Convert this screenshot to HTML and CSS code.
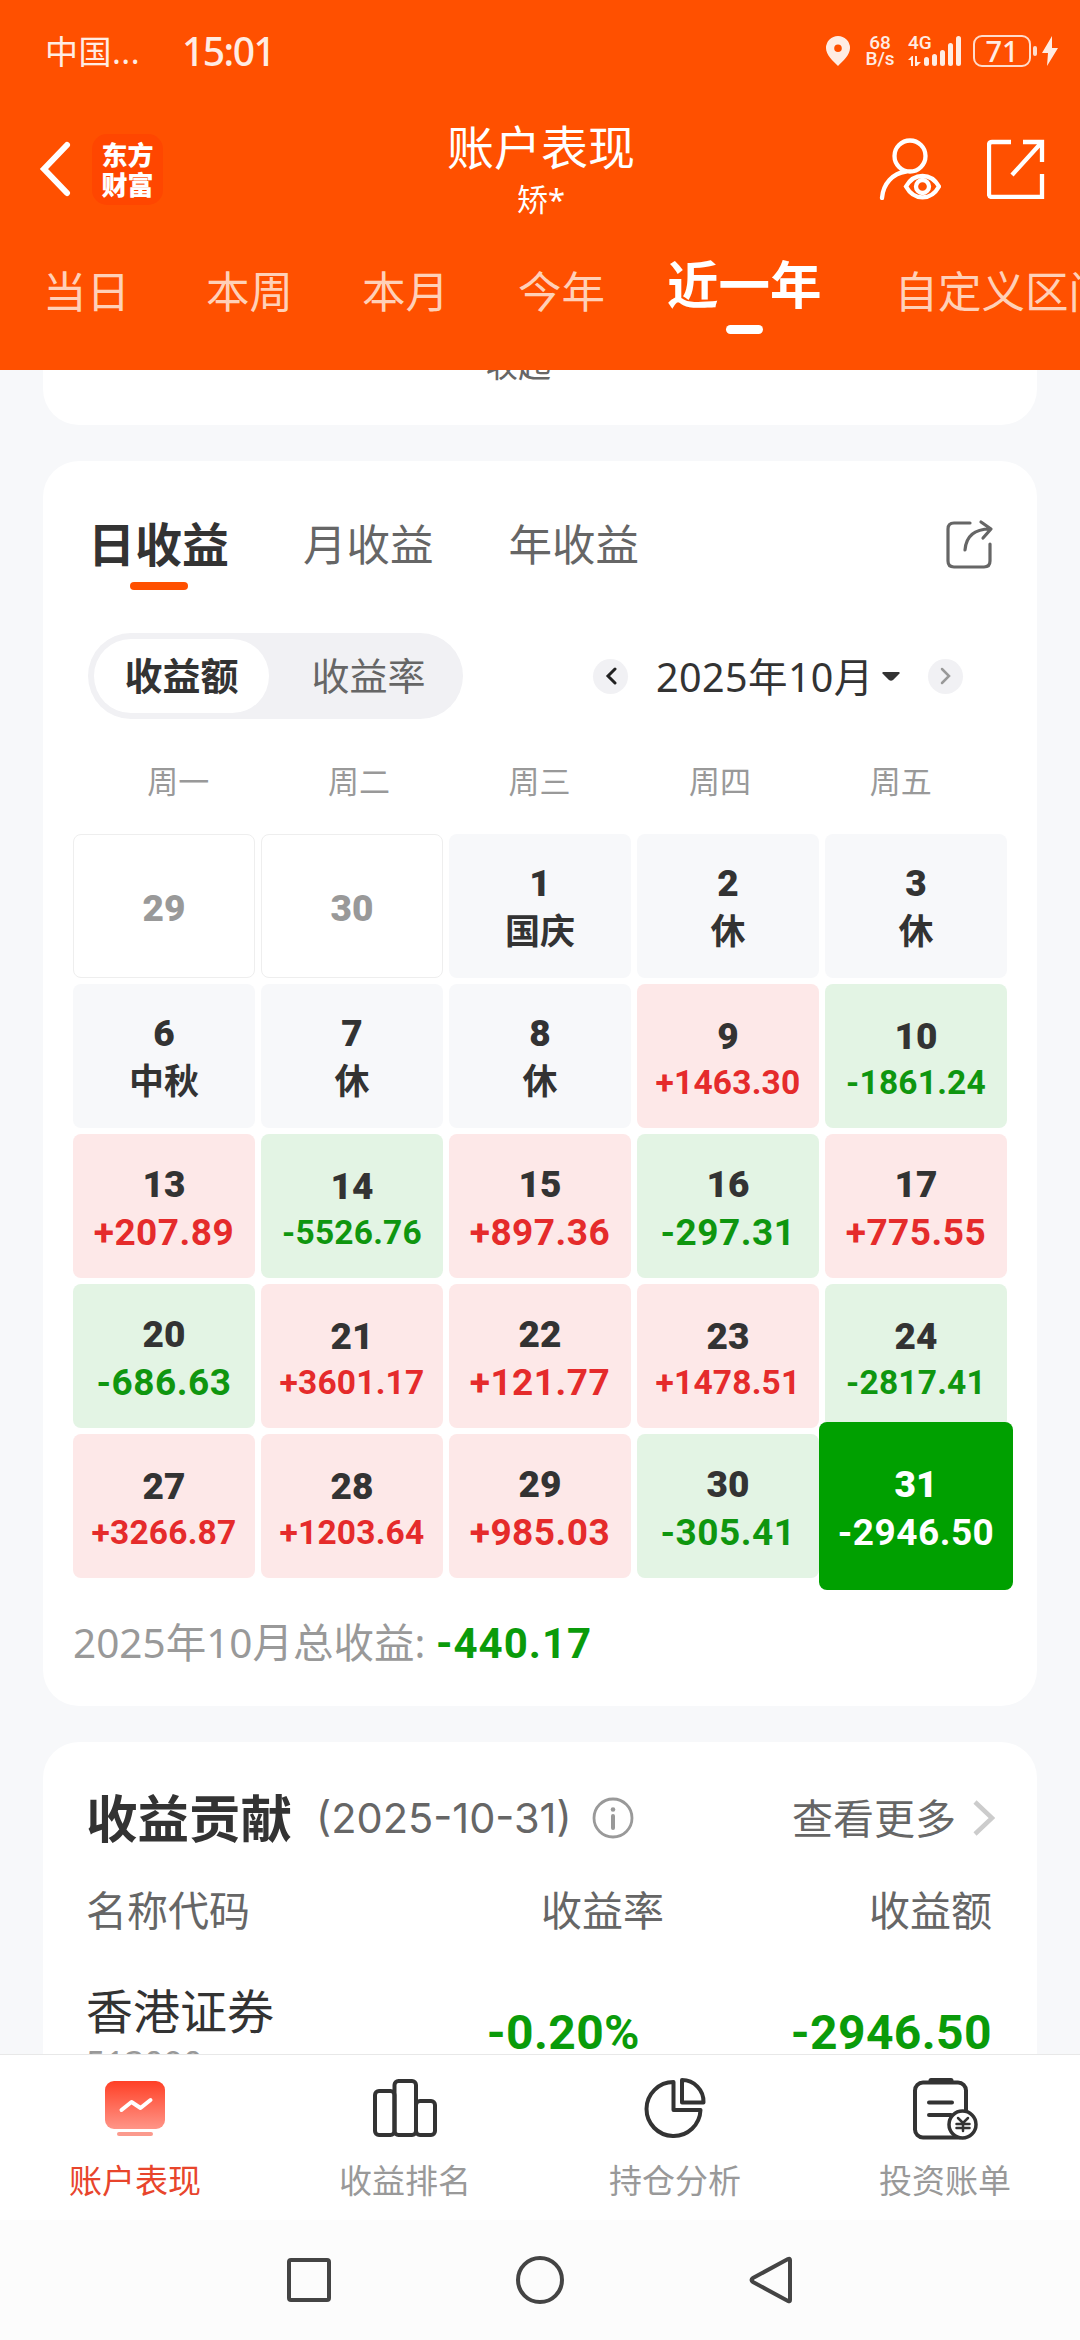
FILE: index.html
```html
<!DOCTYPE html>
<html lang="zh-CN">
<head>
    <meta charset="UTF-8">
    <meta name="viewport" content="width=device-width, initial-scale=1.0">
    <title>账户表现</title>
    <link rel="stylesheet" href="styles.css">
</head>
<body>
    <header class="header">
        <div class="status">
            <span class="carrier">中国...</span>
            <span class="clock">15:01</span>
            <div class="status-icons">
                <svg class="pin" width="24" height="30" viewBox="0 0 24 30"><path fill="#ffece3" fill-rule="evenodd" d="M12 0a12 12 0 0 1 12 12c0 7-7 13-12 18C7 25 0 19 0 12A12 12 0 0 1 12 0zm0 8.500a3.800 3.800 0 1 0 0 7.600 3.800 3.800 0 0 0 0-7.600z"/></svg>
                <div class="speed"><span>68</span><span>B/s</span></div>
                <div class="network">
                    <span>4G</span>
                    <svg width="54" height="30" viewBox="0 0 54 30" fill="#ffece3"><path d="M0 24l4-4h1v10H3v-6zM7 20h2v6h4l-4 4H7z"/><rect x="16" y="21" width="5" height="9" rx="2.500"/><rect x="24" y="18" width="5" height="12" rx="2.500"/><rect x="32" y="14" width="5" height="16" rx="2.500"/><rect x="40" y="7" width="5" height="23" rx="2.500"/><rect x="48" y="0" width="5" height="30" rx="2.500"/></svg>
                </div>
                <div class="battery">71</div>
                <i class="battery-tip"></i>
                <svg width="16" height="30" viewBox="0 0 16 30"><path fill="#ffece3" d="M10 0L0 17h6L5 30l11-18h-6z"/></svg>
            </div>
        </div>
        <div class="navbar">
            <svg class="back" width="32" height="56" viewBox="0 0 32 56"><path d="M28 4L5 28l23 24" fill="none" stroke="#fff" stroke-width="6" stroke-linecap="round"/></svg>
            <div class="logo"><span>东方</span><span>财富</span></div>
            <div class="title">
                <h1>账户表现</h1>
                <p>矫*</p>
            </div>
            <svg class="user" width="62" height="62" viewBox="0 0 62 62" fill="none" stroke="#fff" stroke-width="4.300" stroke-linecap="round"><circle cx="31" cy="18" r="15.500"/><path d="M3 60C4 46 14 35 27 33.500M27 48.500c8-14 25-14 33 0-8 14.500-25 14.500-33 0z"/><circle cx="43.500" cy="48.500" r="6.500"/></svg>
            <svg class="export" width="58" height="60" viewBox="0 0 58 60" fill="none" stroke="#fff" stroke-width="4.300"><path d="M24 3H5q-3 0-3 3v49q0 3 3 3h50V35M36 3h19v20M55 3L25 36"/></svg>
        </div>
        <nav class="ranges">
            <span class="first">当日</span>
            <span>本周</span>
            <span>本月</span>
            <span>今年</span>
            <span class="active">近一年</span>
            <span>自定义区间</span>
        </nav>
    </header>

    <main class="page">
        <section class="card card-top"><span>收起</span></section>

        <section class="card calendar-card">
            <div class="tabs">
                <span class="tab active">日收益</span>
                <span class="tab">月收益</span>
                <span class="tab">年收益</span>
                <svg class="share" width="48" height="50" viewBox="0 0 48 50" fill="none" stroke="#666" stroke-width="3.200" stroke-linecap="round" stroke-linejoin="round"><path d="M24 4H8Q2 4 2 10v32q0 6 6 6h30q6 0 6-6V25M19 31C20 18 28 10 44 10M35 3l10 7-8 9"/></svg>
            </div>
            <div class="toolbar">
                <div class="switch">
                    <span class="on">收益额</span>
                    <span>收益率</span>
                </div>
                <div class="month">
                    <span class="arrow"><svg width="12" height="18" viewBox="0 0 12 18"><path d="M10 2L3 9l7 7" fill="none" stroke="#222" stroke-width="3" stroke-linecap="round"/></svg></span>
                    <span class="month-text">2025年10月</span>
                    <svg class="caret" width="18" height="9" viewBox="0 0 18 9"><path fill="#333" d="M1 0h16q1.500 1 0 2l-6 6q-2 1.500-4 0L1 2q-1.500-1 0-2z"/></svg>
                    <span class="arrow"><svg width="12" height="18" viewBox="0 0 12 18"><path d="M2 2l7 7-7 7" fill="none" stroke="#999" stroke-width="2.500" stroke-linecap="round"/></svg></span>
                </div>
            </div>
            <div class="weekdays">
                <span>周一</span><span>周二</span><span>周三</span><span>周四</span><span>周五</span>
            </div>
            <div class="grid">
                <div class="day other"><b>29</b></div>
                <div class="day other"><b>30</b></div>
                <div class="day"><b>1</b><em>国庆</em></div>
                <div class="day"><b>2</b><em>休</em></div>
                <div class="day"><b>3</b><em>休</em></div>

                <div class="day"><b>6</b><em>中秋</em></div>
                <div class="day"><b>7</b><em>休</em></div>
                <div class="day"><b>8</b><em>休</em></div>
                <div class="day up long"><b>9</b><em>+1463.30</em></div>
                <div class="day down long"><b>10</b><em>-1861.24</em></div>

                <div class="day up"><b>13</b><em>+207.89</em></div>
                <div class="day down long"><b>14</b><em>-5526.76</em></div>
                <div class="day up"><b>15</b><em>+897.36</em></div>
                <div class="day down"><b>16</b><em>-297.31</em></div>
                <div class="day up"><b>17</b><em>+775.55</em></div>

                <div class="day down"><b>20</b><em>-686.63</em></div>
                <div class="day up long"><b>21</b><em>+3601.17</em></div>
                <div class="day up"><b>22</b><em>+121.77</em></div>
                <div class="day up long"><b>23</b><em>+1478.51</em></div>
                <div class="day down long"><b>24</b><em>-2817.41</em></div>

                <div class="day up long"><b>27</b><em>+3266.87</em></div>
                <div class="day up long"><b>28</b><em>+1203.64</em></div>
                <div class="day up"><b>29</b><em>+985.03</em></div>
                <div class="day down"><b>30</b><em>-305.41</em></div>
                <div class="day selected"><b>31</b><em>-2946.50</em></div>
            </div>
            <p class="total">2025年10月总收益: <strong>-440.17</strong></p>
        </section>

        <section class="card contrib">
            <div class="contrib-head">
                <h2>收益贡献</h2>
                <span class="date">(2025-10-31)</span>
                <svg class="info" width="42" height="42" viewBox="0 0 42 42"><circle cx="21" cy="21" r="19" fill="none" stroke="#999" stroke-width="2.800"/><path d="M21 19v12" stroke="#999" stroke-width="4" stroke-linecap="round"/><circle cx="21" cy="12.500" r="2.300" fill="#999"/></svg>
                <span class="more">查看更多</span>
                <svg width="22" height="36" viewBox="0 0 22 36"><path d="M2 2l17 16L2 34" fill="none" stroke="#ccc" stroke-width="4.500"/></svg>
            </div>
            <div class="row row-head">
                <span>名称代码</span><span>收益率</span><span>收益额</span>
            </div>
            <div class="row row-item">
                <div class="stock"><span>香港证券</span><small>513090</small></div>
                <span class="rate">-0.20%</span>
                <span class="amount">-2946.50</span>
            </div>
        </section>
    </main>

    <nav class="tabbar">
        <div class="item active">
            <svg width="64" height="60" viewBox="0 0 64 60"><defs><linearGradient id="red" x1="0" y1="0" x2="0" y2="1"><stop offset="0" stop-color="#ff4026"/><stop offset="1" stop-color="#ff9588"/></linearGradient></defs><rect x="2" y="5" width="60" height="48" rx="9" fill="url(#red)"/><path d="M18.500 34l10-8 9 6 10-8" fill="none" stroke="#fff" stroke-width="4" stroke-linecap="round" stroke-linejoin="round"/><rect x="14" y="56" width="36" height="4" rx="2" fill="#fb9a8d"/></svg>
            <span>账户表现</span>
        </div>
        <div class="item">
            <svg width="64" height="62" viewBox="0 0 64 62" fill="none" stroke="#333" stroke-width="4"><rect x="2" y="15" width="19.500" height="44" rx="4"/><rect x="21.500" y="5" width="21.500" height="54" rx="4"/><rect x="43" y="25" width="19" height="34" rx="4"/></svg>
            <span>收益排名</span>
        </div>
        <div class="item">
            <svg width="64" height="62" viewBox="0 0 64 62" fill="none" stroke="#333" stroke-width="4" stroke-linejoin="round"><path d="M30.500 6A27 27 0 1 0 57.500 34H30.500z"/><path d="M39 4v22.500h21.500C61 14 51 4 39 4z"/></svg>
            <span>持仓分析</span>
        </div>
        <div class="item">
            <svg width="66" height="64" viewBox="0 0 66 64" fill="none" stroke="#333" stroke-width="4" stroke-linecap="round"><path d="M19 4.500h20" stroke-width="5"/><rect x="3" y="6.500" width="51" height="55" rx="8"/><path d="M17 26.500h23M17 39h22"/><circle cx="50.500" cy="48.500" r="13.500" fill="#fff" stroke-width="3.500"/><path d="M46 42l5 5 5-5M51 47v8M44.500 48h13M44.500 52h13" stroke-width="2.500"/></svg>
            <span>投资账单</span>
        </div>
    </nav>
    <div class="sysbar">
        <svg width="46" height="50" viewBox="0 0 46 50"><rect x="3" y="5" width="40" height="40" rx="2" fill="none" stroke="#444" stroke-width="4"/></svg>
        <svg width="50" height="50" viewBox="0 0 50 50"><circle cx="25" cy="25" r="22" fill="none" stroke="#444" stroke-width="4"/></svg>
        <svg width="46" height="50" viewBox="0 0 46 50"><path d="M42 5v40q0 2-2 1L5 27q-3-2 0-4L40 4q2-1 2 1z" fill="none" stroke="#444" stroke-width="4"/></svg>
    </div>
</body>
</html>
```

FILE: styles.css
```css
* {
    box-sizing: border-box;
}
body {
    margin: 0;
    width: 1080px;
    height: 2340px;
    overflow: hidden;
    display: flex;
    flex-direction: column;
    background-color: #f7f8fa;
    font-family: "Noto Sans", "Noto Sans CJK SC", sans-serif;
    color: #333333;
}
h1, h2, p {
    margin: 0;
    font-weight: normal;
}
em, small {
    font-style: normal;
}
svg {
    display: block;
    flex: none;
}
span {
    white-space: nowrap;
}
/* Header */
.header {
    flex: none;
    height: 370px;
    background-color: #ff5000;
    color: #ffffff;
    overflow: hidden;
}
.status {
    height: 102px;
    padding-left: 45px;
    display: flex;
    align-items: center;
    color: #ffece3;
}
.carrier {
    width: 137px;
    margin-top: -2px;
    font-size: 33px;
    letter-spacing: .5px;
}
.clock {
    margin-top: -2px;
    font-size: 39px;
    font-weight: 500;
    letter-spacing: -1.500px;
}
.status-icons {
    margin-left: auto;
    padding-right: 22px;
    display: flex;
    align-items: center;
}
.speed {
    margin-left: 16px;
    width: 28px;
    display: flex;
    flex-direction: column;
    align-items: center;
    font-family: Roboto, sans-serif;
    font-size: 19px;
    font-weight: 500;
    line-height: 16px;
}
.network {
    margin-left: 14px;
    width: 54px;
    height: 30px;
    display: grid;
}
.network span, .network svg {
    grid-area: 1 / 1;
}
.network span {
    font-family: Roboto, sans-serif;
    font-size: 19px;
    font-weight: 500;
    line-height: 14px;
}
.battery {
    margin-left: 11px;
    width: 58px;
    height: 32px;
    border: 2px solid #ffdccb;
    border-radius: 9px;
    font-size: 29px;
    font-weight: 500;
    line-height: 27px;
    text-align: center;
}
.battery-tip {
    width: 4px;
    height: 10px;
    margin: 0 5px 0 2px;
    border-radius: 2px;
    background-color: #ffdccb;
}
.navbar {
    height: 134px;
    display: flex;
    align-items: center;
}
.back {
    margin-left: 39px;
}
.logo {
    margin-left: 21px;
    width: 71px;
    height: 71px;
    border-radius: 15px;
    background-color: #ff4600;
    display: flex;
    flex-direction: column;
    align-items: center;
    justify-content: center;
    font-family: "Noto Sans CJK SC", sans-serif;
    font-size: 26px;
    font-weight: 900;
    line-height: 30px;
}
.title {
    flex: 1;
    padding-left: 79px;
    padding-right: 39px;
    text-align: center;
}
.title h1 {
    font-size: 47px;
    line-height: 60px;
}
.title p {
    font-size: 31px;
    line-height: 44px;
}
.export {
    margin: 0 35px 0 46px;
}
.ranges {
    height: 134px;
    display: flex;
    font-size: 43.5px;
    line-height: 110px;
    color: #ffd0b8;
}
.ranges span {
    margin-right: 69px;
}
.ranges .first {
    margin-left: 43px;
    margin-right: 76px;
}
.ranges .active {
    margin-left: -7px;
    margin-right: 73px;
    display: flex;
    flex-direction: column;
    align-items: center;
    font-size: 51.5px;
    font-weight: bold;
    line-height: 89px;
    padding-top: 4px;
    color: #ffffff;
}
.ranges .active::after {
    content: "";
    width: 37px;
    height: 9px;
    margin-top: -4px;
    border-radius: 5px;
    background-color: #ffffff;
}
/* Cards */
.page {
    height: 1684px;
    flex: none;
    overflow: hidden;
    padding: 0 43px;
}
.card {
    background-color: #ffffff;
    border-radius: 36px;
}
.card-top {
    height: 55px;
    margin-bottom: 36px;
    border-radius: 0 0 36px 36px;
    overflow: hidden;
    padding-left: 442px;
    font-size: 33px;
    color: #666666;
}
.card-top span {
    display: block;
    margin-top: -29px;
    line-height: 48px;
}
.calendar-card {
    height: 1245px;
    margin-bottom: 36px;
    overflow: hidden;
}
.tabs {
    height: 172px;
    padding: 0 43px 0 45px;
    display: flex;
    line-height: 166px;
    font-size: 43.5px;
    color: #666666;
}
.tab {
    margin-right: 75px;
}
.tab.active {
    display: flex;
    flex-direction: column;
    align-items: center;
    font-size: 47px;
    font-weight: bold;
    color: #333333;
    margin-right: 74px;
}
.tab.active::after {
    content: "";
    width: 58px;
    height: 8px;
    margin-top: -45px;
    border-radius: 4px;
    background-color: #ff5000;
}
.share {
    margin: 58px 0 0 auto;
}
.toolbar {
    height: 86px;
    padding: 0 74px 0 45px;
    display: flex;
    align-items: center;
    justify-content: space-between;
}
.switch {
    width: 375px;
    height: 86px;
    padding: 6px;
    border-radius: 43px;
    background-color: #f1f1f4;
    display: flex;
    font-size: 38px;
    line-height: 73px;
    color: #666666;
    text-align: center;
}
.switch span {
    flex: none;
    width: 199px;
}
.switch .on {
    width: 175px;
    border-radius: 37px;
    background-color: #ffffff;
    font-weight: bold;
    color: #333333;
}
.month {
    display: flex;
    align-items: center;
}
.arrow {
    width: 35px;
    height: 35px;
    border-radius: 50%;
    background-color: #f1f1f4;
    display: flex;
    align-items: center;
    justify-content: center;
}
.month-text {
    margin: -3px 0 0 28px;
    width: 226px;
    font-size: 39.5px;
    letter-spacing: .4px;
}
.caret {
    margin-right: 28px;
}
.weekdays {
    height: 115px;
    padding: 0 46px 0 45px;
    display: flex;
    line-height: 124px;
    font-size: 31px;
    color: #999999;
    text-align: center;
}
.weekdays span {
    flex: 1;
}
.grid {
    padding-left: 30px;
    display: grid;
    grid-template-columns: repeat(5, 182px);
    grid-auto-rows: 144px;
    gap: 6px;
}
.day {
    padding-top: 5px;
    border-radius: 8px;
    background-color: #f7f8fa;
    display: flex;
    flex-direction: column;
    align-items: center;
    justify-content: center;
    font-family: Roboto, "Noto Sans CJK SC", sans-serif;
    font-weight: bold;
    font-size: 37px;
    line-height: 48px;
}
.day em {
    font-size: 35px;
    line-height: 50px;
}
.day.up em, .day.down em, .day.selected em {
    font-size: 37px;
    line-height: 48px;
    letter-spacing: .5px;
}
.day.long.up em, .day.long.down em {
    font-size: 33.5px;
    line-height: 44px;
    letter-spacing: .2px;
}
.day.other {
    background-color: #ffffff;
    border: 1px solid #eeeeee;
    color: #999999;
}
.day.up {
    background-color: #fde8e8;
}
.day.up em {
    color: #e52b2b;
}
.day.down {
    background-color: #e3f4e4;
}
.day.down em {
    color: #0f960f;
}
.day.selected {
    margin: -12px -6px;
    background-color: #00a000;
    color: #ffffff;
}
.total {
    padding-left: 30px;
    font-size: 40.5px;
    line-height: 129px;
    color: #999999;
}
.total strong {
    font-family: Roboto, sans-serif;
    font-size: 42px;
    letter-spacing: 1px;
    color: #0a9b0a;
}
/* Contribution list */
.contrib {
    height: 600px;
    padding: 0 42px 0 43px;
}
.contrib-head {
    height: 152px;
    display: flex;
    align-items: center;
    color: #666666;
    font-size: 41px;
}
.contrib-head h2 {
    margin-top: -5px;
    font-size: 51.5px;
    font-weight: bold;
    color: #333333;
}
.date {
    margin-left: 24px;
    font-family: Inter, sans-serif;
    font-size: 41.5px;
}
.info {
    margin-left: 20px;
}
.more {
    margin-top: -5px;
    margin-left: auto;
    margin-right: 17px;
}
.row {
    padding-right: 3px;
    display: grid;
    grid-template-columns: 330px 1fr 328px;
}
.row > :nth-child(n+2) {
    text-align: right;
}
.row-head {
    height: 80px;
    line-height: 32px;
    font-size: 41px;
    color: #666666;
}
.stock {
    display: flex;
    flex-direction: column;
    font-size: 47px;
    line-height: 74px;
}
.stock small {
    font-size: 34px;
    line-height: 31px;
    color: #999999;
}
.rate, .amount {
    font-family: Roboto, sans-serif;
    font-size: 48px;
    font-weight: bold;
    line-height: 118px;
    letter-spacing: .4px;
    color: #0a9b0a;
}
.rate {
    padding-right: 24px;
}
/* Bottom bars */
.tabbar {
    flex: none;
    height: 166px;
    display: flex;
    background-color: #ffffff;
    border-top: 1px solid #e8e8e8;
}
.item {
    flex: 1;
    height: 165px;
    padding-top: 21px;
    display: flex;
    flex-direction: column;
    align-items: center;
    font-size: 33px;
    line-height: 40px;
    color: #999999;
}
.item span {
    margin-top: auto;
    margin-bottom: 19px;
}
.item.active {
    color: #e8452c;
}
.sysbar {
    height: 120px;
    flex: none;
    display: flex;
    align-items: center;
    justify-content: center;
    gap: 183px;
    background-color: #fcfcfc;
}
```
